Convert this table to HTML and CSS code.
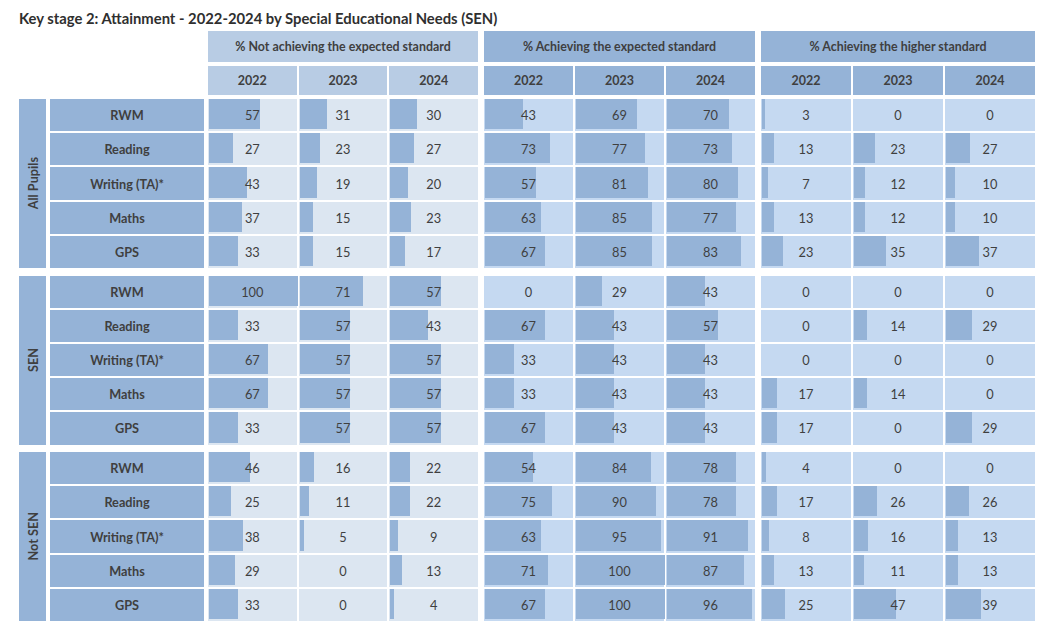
FILE: index.html
```html
<!DOCTYPE html>
<html>
<head>
<meta charset="utf-8">
<link rel="stylesheet" href="styles.css">
</head>
<body>
<div class="sheet">
  <h1 class="title">Key stage 2: Attainment - 2022-2024 by Special Educational Needs (SEN)</h1>
  <div class="table">
    <div class="hrow top">
      <div class="spacer"></div>
      <div class="sec s1 head">% Not achieving the expected standard</div>
      <div class="sec s2 head">% Achieving the expected standard</div>
      <div class="sec s3 head">% Achieving the higher standard</div>
    </div>
    <div class="hrow years">
      <div class="spacer"></div>
      <div class="sec s1"><div class="yr">2022</div><div class="yr">2023</div><div class="yr">2024</div></div>
      <div class="sec s2"><div class="yr">2022</div><div class="yr">2023</div><div class="yr">2024</div></div>
      <div class="sec s3"><div class="yr">2022</div><div class="yr">2023</div><div class="yr">2024</div></div>
    </div>

    <div class="group">
      <div class="glabel"><span>All Pupils</span></div>
      <div class="rows">
        <div class="row"><div class="rlabel">RWM</div>
          <div class="sec s1"><div class="cell"><i class="bar" style="width:57%"></i><span>57</span></div><div class="cell"><i class="bar" style="width:31%"></i><span>31</span></div><div class="cell"><i class="bar" style="width:30%"></i><span>30</span></div></div>
          <div class="sec s2"><div class="cell"><i class="bar" style="width:43%"></i><span>43</span></div><div class="cell"><i class="bar" style="width:69%"></i><span>69</span></div><div class="cell"><i class="bar" style="width:70%"></i><span>70</span></div></div>
          <div class="sec s3"><div class="cell"><i class="bar" style="width:3%"></i><span>3</span></div><div class="cell"><span>0</span></div><div class="cell"><span>0</span></div></div>
        </div>
        <div class="row"><div class="rlabel">Reading</div>
          <div class="sec s1"><div class="cell"><i class="bar" style="width:27%"></i><span>27</span></div><div class="cell"><i class="bar" style="width:23%"></i><span>23</span></div><div class="cell"><i class="bar" style="width:27%"></i><span>27</span></div></div>
          <div class="sec s2"><div class="cell"><i class="bar" style="width:73%"></i><span>73</span></div><div class="cell"><i class="bar" style="width:77%"></i><span>77</span></div><div class="cell"><i class="bar" style="width:73%"></i><span>73</span></div></div>
          <div class="sec s3"><div class="cell"><i class="bar" style="width:13%"></i><span>13</span></div><div class="cell"><i class="bar" style="width:23%"></i><span>23</span></div><div class="cell"><i class="bar" style="width:27%"></i><span>27</span></div></div>
        </div>
        <div class="row"><div class="rlabel">Writing (TA)*</div>
          <div class="sec s1"><div class="cell"><i class="bar" style="width:43%"></i><span>43</span></div><div class="cell"><i class="bar" style="width:19%"></i><span>19</span></div><div class="cell"><i class="bar" style="width:20%"></i><span>20</span></div></div>
          <div class="sec s2"><div class="cell"><i class="bar" style="width:57%"></i><span>57</span></div><div class="cell"><i class="bar" style="width:81%"></i><span>81</span></div><div class="cell"><i class="bar" style="width:80%"></i><span>80</span></div></div>
          <div class="sec s3"><div class="cell"><i class="bar" style="width:7%"></i><span>7</span></div><div class="cell"><i class="bar" style="width:12%"></i><span>12</span></div><div class="cell"><i class="bar" style="width:10%"></i><span>10</span></div></div>
        </div>
        <div class="row"><div class="rlabel">Maths</div>
          <div class="sec s1"><div class="cell"><i class="bar" style="width:37%"></i><span>37</span></div><div class="cell"><i class="bar" style="width:15%"></i><span>15</span></div><div class="cell"><i class="bar" style="width:23%"></i><span>23</span></div></div>
          <div class="sec s2"><div class="cell"><i class="bar" style="width:63%"></i><span>63</span></div><div class="cell"><i class="bar" style="width:85%"></i><span>85</span></div><div class="cell"><i class="bar" style="width:77%"></i><span>77</span></div></div>
          <div class="sec s3"><div class="cell"><i class="bar" style="width:13%"></i><span>13</span></div><div class="cell"><i class="bar" style="width:12%"></i><span>12</span></div><div class="cell"><i class="bar" style="width:10%"></i><span>10</span></div></div>
        </div>
        <div class="row"><div class="rlabel">GPS</div>
          <div class="sec s1"><div class="cell"><i class="bar" style="width:33%"></i><span>33</span></div><div class="cell"><i class="bar" style="width:15%"></i><span>15</span></div><div class="cell"><i class="bar" style="width:17%"></i><span>17</span></div></div>
          <div class="sec s2"><div class="cell"><i class="bar" style="width:67%"></i><span>67</span></div><div class="cell"><i class="bar" style="width:85%"></i><span>85</span></div><div class="cell"><i class="bar" style="width:83%"></i><span>83</span></div></div>
          <div class="sec s3"><div class="cell"><i class="bar" style="width:23%"></i><span>23</span></div><div class="cell"><i class="bar" style="width:35%"></i><span>35</span></div><div class="cell"><i class="bar" style="width:37%"></i><span>37</span></div></div>
        </div>
      </div>
    </div>

    <div class="group">
      <div class="glabel"><span>SEN</span></div>
      <div class="rows">
        <div class="row"><div class="rlabel">RWM</div>
          <div class="sec s1"><div class="cell"><i class="bar" style="width:100%"></i><span>100</span></div><div class="cell"><i class="bar" style="width:71%"></i><span>71</span></div><div class="cell"><i class="bar" style="width:57%"></i><span>57</span></div></div>
          <div class="sec s2"><div class="cell"><span>0</span></div><div class="cell"><i class="bar" style="width:29%"></i><span>29</span></div><div class="cell"><i class="bar" style="width:43%"></i><span>43</span></div></div>
          <div class="sec s3"><div class="cell"><span>0</span></div><div class="cell"><span>0</span></div><div class="cell"><span>0</span></div></div>
        </div>
        <div class="row"><div class="rlabel">Reading</div>
          <div class="sec s1"><div class="cell"><i class="bar" style="width:33%"></i><span>33</span></div><div class="cell"><i class="bar" style="width:57%"></i><span>57</span></div><div class="cell"><i class="bar" style="width:43%"></i><span>43</span></div></div>
          <div class="sec s2"><div class="cell"><i class="bar" style="width:67%"></i><span>67</span></div><div class="cell"><i class="bar" style="width:43%"></i><span>43</span></div><div class="cell"><i class="bar" style="width:57%"></i><span>57</span></div></div>
          <div class="sec s3"><div class="cell"><span>0</span></div><div class="cell"><i class="bar" style="width:14%"></i><span>14</span></div><div class="cell"><i class="bar" style="width:29%"></i><span>29</span></div></div>
        </div>
        <div class="row"><div class="rlabel">Writing (TA)*</div>
          <div class="sec s1"><div class="cell"><i class="bar" style="width:67%"></i><span>67</span></div><div class="cell"><i class="bar" style="width:57%"></i><span>57</span></div><div class="cell"><i class="bar" style="width:57%"></i><span>57</span></div></div>
          <div class="sec s2"><div class="cell"><i class="bar" style="width:33%"></i><span>33</span></div><div class="cell"><i class="bar" style="width:43%"></i><span>43</span></div><div class="cell"><i class="bar" style="width:43%"></i><span>43</span></div></div>
          <div class="sec s3"><div class="cell"><span>0</span></div><div class="cell"><span>0</span></div><div class="cell"><span>0</span></div></div>
        </div>
        <div class="row"><div class="rlabel">Maths</div>
          <div class="sec s1"><div class="cell"><i class="bar" style="width:67%"></i><span>67</span></div><div class="cell"><i class="bar" style="width:57%"></i><span>57</span></div><div class="cell"><i class="bar" style="width:57%"></i><span>57</span></div></div>
          <div class="sec s2"><div class="cell"><i class="bar" style="width:33%"></i><span>33</span></div><div class="cell"><i class="bar" style="width:43%"></i><span>43</span></div><div class="cell"><i class="bar" style="width:43%"></i><span>43</span></div></div>
          <div class="sec s3"><div class="cell"><i class="bar" style="width:17%"></i><span>17</span></div><div class="cell"><i class="bar" style="width:14%"></i><span>14</span></div><div class="cell"><span>0</span></div></div>
        </div>
        <div class="row"><div class="rlabel">GPS</div>
          <div class="sec s1"><div class="cell"><i class="bar" style="width:33%"></i><span>33</span></div><div class="cell"><i class="bar" style="width:57%"></i><span>57</span></div><div class="cell"><i class="bar" style="width:57%"></i><span>57</span></div></div>
          <div class="sec s2"><div class="cell"><i class="bar" style="width:67%"></i><span>67</span></div><div class="cell"><i class="bar" style="width:43%"></i><span>43</span></div><div class="cell"><i class="bar" style="width:43%"></i><span>43</span></div></div>
          <div class="sec s3"><div class="cell"><i class="bar" style="width:17%"></i><span>17</span></div><div class="cell"><span>0</span></div><div class="cell"><i class="bar" style="width:29%"></i><span>29</span></div></div>
        </div>
      </div>
    </div>

    <div class="group">
      <div class="glabel"><span>Not SEN</span></div>
      <div class="rows">
        <div class="row"><div class="rlabel">RWM</div>
          <div class="sec s1"><div class="cell"><i class="bar" style="width:46%"></i><span>46</span></div><div class="cell"><i class="bar" style="width:16%"></i><span>16</span></div><div class="cell"><i class="bar" style="width:22%"></i><span>22</span></div></div>
          <div class="sec s2"><div class="cell"><i class="bar" style="width:54%"></i><span>54</span></div><div class="cell"><i class="bar" style="width:84%"></i><span>84</span></div><div class="cell"><i class="bar" style="width:78%"></i><span>78</span></div></div>
          <div class="sec s3"><div class="cell"><i class="bar" style="width:4%"></i><span>4</span></div><div class="cell"><span>0</span></div><div class="cell"><span>0</span></div></div>
        </div>
        <div class="row"><div class="rlabel">Reading</div>
          <div class="sec s1"><div class="cell"><i class="bar" style="width:25%"></i><span>25</span></div><div class="cell"><i class="bar" style="width:11%"></i><span>11</span></div><div class="cell"><i class="bar" style="width:22%"></i><span>22</span></div></div>
          <div class="sec s2"><div class="cell"><i class="bar" style="width:75%"></i><span>75</span></div><div class="cell"><i class="bar" style="width:90%"></i><span>90</span></div><div class="cell"><i class="bar" style="width:78%"></i><span>78</span></div></div>
          <div class="sec s3"><div class="cell"><i class="bar" style="width:17%"></i><span>17</span></div><div class="cell"><i class="bar" style="width:26%"></i><span>26</span></div><div class="cell"><i class="bar" style="width:26%"></i><span>26</span></div></div>
        </div>
        <div class="row"><div class="rlabel">Writing (TA)*</div>
          <div class="sec s1"><div class="cell"><i class="bar" style="width:38%"></i><span>38</span></div><div class="cell"><i class="bar" style="width:5%"></i><span>5</span></div><div class="cell"><i class="bar" style="width:9%"></i><span>9</span></div></div>
          <div class="sec s2"><div class="cell"><i class="bar" style="width:63%"></i><span>63</span></div><div class="cell"><i class="bar" style="width:95%"></i><span>95</span></div><div class="cell"><i class="bar" style="width:91%"></i><span>91</span></div></div>
          <div class="sec s3"><div class="cell"><i class="bar" style="width:8%"></i><span>8</span></div><div class="cell"><i class="bar" style="width:16%"></i><span>16</span></div><div class="cell"><i class="bar" style="width:13%"></i><span>13</span></div></div>
        </div>
        <div class="row"><div class="rlabel">Maths</div>
          <div class="sec s1"><div class="cell"><i class="bar" style="width:29%"></i><span>29</span></div><div class="cell"><span>0</span></div><div class="cell"><i class="bar" style="width:13%"></i><span>13</span></div></div>
          <div class="sec s2"><div class="cell"><i class="bar" style="width:71%"></i><span>71</span></div><div class="cell"><i class="bar" style="width:100%"></i><span>100</span></div><div class="cell"><i class="bar" style="width:87%"></i><span>87</span></div></div>
          <div class="sec s3"><div class="cell"><i class="bar" style="width:13%"></i><span>13</span></div><div class="cell"><i class="bar" style="width:11%"></i><span>11</span></div><div class="cell"><i class="bar" style="width:13%"></i><span>13</span></div></div>
        </div>
        <div class="row"><div class="rlabel">GPS</div>
          <div class="sec s1"><div class="cell"><i class="bar" style="width:33%"></i><span>33</span></div><div class="cell"><span>0</span></div><div class="cell"><i class="bar" style="width:4%"></i><span>4</span></div></div>
          <div class="sec s2"><div class="cell"><i class="bar" style="width:67%"></i><span>67</span></div><div class="cell"><i class="bar" style="width:100%"></i><span>100</span></div><div class="cell"><i class="bar" style="width:96%"></i><span>96</span></div></div>
          <div class="sec s3"><div class="cell"><i class="bar" style="width:25%"></i><span>25</span></div><div class="cell"><i class="bar" style="width:47%"></i><span>47</span></div><div class="cell"><i class="bar" style="width:39%"></i><span>39</span></div></div>
        </div>
      </div>
    </div>
  </div>
</div>
</body>
</html>
```
FILE: styles.css
```css
* { box-sizing: border-box; }
body {
  margin: 0;
  background: #ffffff;
  font-family: Lato, "Liberation Sans", sans-serif;
  color: #3f3f3f;
}
.sheet {
  padding: 9px 0 0 19px;
}
.title {
  margin: 0;
  font-size: 14.8px;
  font-weight: 700;
  line-height: 18px;
  color: #2f2f2f;
  height: 22px;
}
.table {
  display: flex;
  flex-direction: column;
  width: 1016px;
}
.hrow {
  display: flex;
}
.hrow.top { height: 31px; margin-bottom: 4px; }
.hrow.years { height: 29px; margin-bottom: 4px; }
.spacer { width: 189px; flex: none; }
.sec {
  display: flex;
  gap: 2px;
  flex: none;
}
.sec.s1 { width: 270px; }
.sec.s2 { width: 271px; margin-left: 6px; }
.sec.s3 { width: 274px; margin-left: 6px; }
.sec.head {
  align-items: center;
  justify-content: center;
  font-size: 12.4px;
  font-weight: 700;
  background: #95b3d7;
}
.sec.s1.head { background: #b8cce4; }
.yr {
  flex: 1 1 0;
  display: flex;
  align-items: center;
  justify-content: center;
  font-size: 12.5px;
  font-weight: 700;
  background: #95b3d7;
}
.s1 .yr { background: #b8cce4; }
.group {
  display: flex;
  height: 169px;
  margin-bottom: 7.5px;
}
.glabel {
  width: 27px;
  flex: none;
  margin-right: 4px;
  background: #95b3d7;
  display: flex;
  align-items: center;
  justify-content: center;
}
.glabel span {
  writing-mode: vertical-rl;
  transform: rotate(180deg);
  font-size: 12.7px;
  font-weight: 700;
}
.rows {
  display: flex;
  flex-direction: column;
  gap: 2px;
  flex: 1;
}
.row {
  display: flex;
  flex: 1 1 0;
}
.rlabel {
  width: 154px;
  flex: none;
  margin-right: 4px;
  background: #95b3d7;
  display: flex;
  align-items: center;
  justify-content: center;
  font-size: 12.7px;
  font-weight: 700;
}
.cell {
  flex: 1 1 0;
  position: relative;
  display: flex;
  align-items: center;
  justify-content: center;
  background: #c5d9f1;
  font-size: 12.8px;
}
.s1 .cell { background: #dce6f1; }
.bar {
  position: absolute;
  left: 1px;
  top: 0;
  bottom: 2px;
  background: #95b3d7;
}
.cell span { position: relative; }
```
